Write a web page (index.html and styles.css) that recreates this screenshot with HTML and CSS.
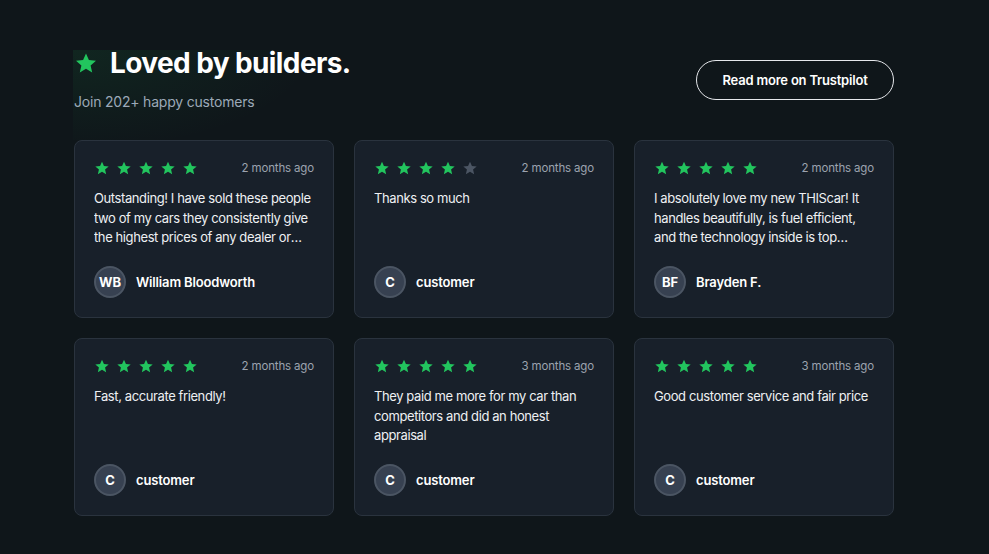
FILE: index.html
```html
<!DOCTYPE html>
<html lang="en">
<head>
<meta charset="utf-8">
<title>Loved by builders</title>
<link rel="stylesheet" href="styles.css">
</head>
<body>
<section class="reviews">
  <header class="reviews-head">
    <div class="head-text">
      <h1 class="title">
        <svg class="title-star" viewBox="0 0 24 24"><path d="M12 2.5l2.9 6.6 7.1.6-5.4 4.7 1.6 7-6.2-3.7-6.2 3.7 1.6-7L2 9.7l7.1-.6z"/></svg>
        Loved by builders.
      </h1>
      <p class="subtitle">Join 202+ happy customers</p>
    </div>
    <a class="tp-btn" href="#">Read more on Trustpilot</a>
  </header>

  <div class="grid">
    <article class="card">
      <div class="card-top">
        <div class="stars">
          <svg class="star on" viewBox="0 0 24 24"><path d="M12 2.5l2.9 6.6 7.1.6-5.4 4.7 1.6 7-6.2-3.7-6.2 3.7 1.6-7L2 9.7l7.1-.6z"/></svg>
          <svg class="star on" viewBox="0 0 24 24"><path d="M12 2.5l2.9 6.6 7.1.6-5.4 4.7 1.6 7-6.2-3.7-6.2 3.7 1.6-7L2 9.7l7.1-.6z"/></svg>
          <svg class="star on" viewBox="0 0 24 24"><path d="M12 2.5l2.9 6.6 7.1.6-5.4 4.7 1.6 7-6.2-3.7-6.2 3.7 1.6-7L2 9.7l7.1-.6z"/></svg>
          <svg class="star on" viewBox="0 0 24 24"><path d="M12 2.5l2.9 6.6 7.1.6-5.4 4.7 1.6 7-6.2-3.7-6.2 3.7 1.6-7L2 9.7l7.1-.6z"/></svg>
          <svg class="star on" viewBox="0 0 24 24"><path d="M12 2.5l2.9 6.6 7.1.6-5.4 4.7 1.6 7-6.2-3.7-6.2 3.7 1.6-7L2 9.7l7.1-.6z"/></svg>
        </div>
        <span class="date">2 months ago</span>
      </div>
      <p class="text">Outstanding! I have sold these people two of my cars they consistently give the highest prices of any dealer or buyer that I have ever dealt with.</p>
      <div class="author"><span class="avatar">WB</span><span class="name">William Bloodworth</span></div>
    </article>

    <article class="card">
      <div class="card-top">
        <div class="stars">
          <svg class="star on" viewBox="0 0 24 24"><path d="M12 2.5l2.9 6.6 7.1.6-5.4 4.7 1.6 7-6.2-3.7-6.2 3.7 1.6-7L2 9.7l7.1-.6z"/></svg>
          <svg class="star on" viewBox="0 0 24 24"><path d="M12 2.5l2.9 6.6 7.1.6-5.4 4.7 1.6 7-6.2-3.7-6.2 3.7 1.6-7L2 9.7l7.1-.6z"/></svg>
          <svg class="star on" viewBox="0 0 24 24"><path d="M12 2.5l2.9 6.6 7.1.6-5.4 4.7 1.6 7-6.2-3.7-6.2 3.7 1.6-7L2 9.7l7.1-.6z"/></svg>
          <svg class="star on" viewBox="0 0 24 24"><path d="M12 2.5l2.9 6.6 7.1.6-5.4 4.7 1.6 7-6.2-3.7-6.2 3.7 1.6-7L2 9.7l7.1-.6z"/></svg>
          <svg class="star off" viewBox="0 0 24 24"><path d="M12 2.5l2.9 6.6 7.1.6-5.4 4.7 1.6 7-6.2-3.7-6.2 3.7 1.6-7L2 9.7l7.1-.6z"/></svg>
        </div>
        <span class="date">2 months ago</span>
      </div>
      <p class="text">Thanks so much</p>
      <div class="author"><span class="avatar">C</span><span class="name">customer</span></div>
    </article>

    <article class="card">
      <div class="card-top">
        <div class="stars">
          <svg class="star on" viewBox="0 0 24 24"><path d="M12 2.5l2.9 6.6 7.1.6-5.4 4.7 1.6 7-6.2-3.7-6.2 3.7 1.6-7L2 9.7l7.1-.6z"/></svg>
          <svg class="star on" viewBox="0 0 24 24"><path d="M12 2.5l2.9 6.6 7.1.6-5.4 4.7 1.6 7-6.2-3.7-6.2 3.7 1.6-7L2 9.7l7.1-.6z"/></svg>
          <svg class="star on" viewBox="0 0 24 24"><path d="M12 2.5l2.9 6.6 7.1.6-5.4 4.7 1.6 7-6.2-3.7-6.2 3.7 1.6-7L2 9.7l7.1-.6z"/></svg>
          <svg class="star on" viewBox="0 0 24 24"><path d="M12 2.5l2.9 6.6 7.1.6-5.4 4.7 1.6 7-6.2-3.7-6.2 3.7 1.6-7L2 9.7l7.1-.6z"/></svg>
          <svg class="star on" viewBox="0 0 24 24"><path d="M12 2.5l2.9 6.6 7.1.6-5.4 4.7 1.6 7-6.2-3.7-6.2 3.7 1.6-7L2 9.7l7.1-.6z"/></svg>
        </div>
        <span class="date">2 months ago</span>
      </div>
      <p class="text">I absolutely love my new THIScar! It handles beautifully, is fuel efficient, and the technology inside is top notch. The whole experience was great.</p>
      <div class="author"><span class="avatar">BF</span><span class="name">Brayden F.</span></div>
    </article>

    <article class="card">
      <div class="card-top">
        <div class="stars">
          <svg class="star on" viewBox="0 0 24 24"><path d="M12 2.5l2.9 6.6 7.1.6-5.4 4.7 1.6 7-6.2-3.7-6.2 3.7 1.6-7L2 9.7l7.1-.6z"/></svg>
          <svg class="star on" viewBox="0 0 24 24"><path d="M12 2.5l2.9 6.6 7.1.6-5.4 4.7 1.6 7-6.2-3.7-6.2 3.7 1.6-7L2 9.7l7.1-.6z"/></svg>
          <svg class="star on" viewBox="0 0 24 24"><path d="M12 2.5l2.9 6.6 7.1.6-5.4 4.7 1.6 7-6.2-3.7-6.2 3.7 1.6-7L2 9.7l7.1-.6z"/></svg>
          <svg class="star on" viewBox="0 0 24 24"><path d="M12 2.5l2.9 6.6 7.1.6-5.4 4.7 1.6 7-6.2-3.7-6.2 3.7 1.6-7L2 9.7l7.1-.6z"/></svg>
          <svg class="star on" viewBox="0 0 24 24"><path d="M12 2.5l2.9 6.6 7.1.6-5.4 4.7 1.6 7-6.2-3.7-6.2 3.7 1.6-7L2 9.7l7.1-.6z"/></svg>
        </div>
        <span class="date">2 months ago</span>
      </div>
      <p class="text">Fast, accurate friendly!</p>
      <div class="author"><span class="avatar">C</span><span class="name">customer</span></div>
    </article>

    <article class="card">
      <div class="card-top">
        <div class="stars">
          <svg class="star on" viewBox="0 0 24 24"><path d="M12 2.5l2.9 6.6 7.1.6-5.4 4.7 1.6 7-6.2-3.7-6.2 3.7 1.6-7L2 9.7l7.1-.6z"/></svg>
          <svg class="star on" viewBox="0 0 24 24"><path d="M12 2.5l2.9 6.6 7.1.6-5.4 4.7 1.6 7-6.2-3.7-6.2 3.7 1.6-7L2 9.7l7.1-.6z"/></svg>
          <svg class="star on" viewBox="0 0 24 24"><path d="M12 2.5l2.9 6.6 7.1.6-5.4 4.7 1.6 7-6.2-3.7-6.2 3.7 1.6-7L2 9.7l7.1-.6z"/></svg>
          <svg class="star on" viewBox="0 0 24 24"><path d="M12 2.5l2.9 6.6 7.1.6-5.4 4.7 1.6 7-6.2-3.7-6.2 3.7 1.6-7L2 9.7l7.1-.6z"/></svg>
          <svg class="star on" viewBox="0 0 24 24"><path d="M12 2.5l2.9 6.6 7.1.6-5.4 4.7 1.6 7-6.2-3.7-6.2 3.7 1.6-7L2 9.7l7.1-.6z"/></svg>
        </div>
        <span class="date">3 months ago</span>
      </div>
      <p class="text">They paid me more for my car than competitors and did an honest appraisal</p>
      <div class="author"><span class="avatar">C</span><span class="name">customer</span></div>
    </article>

    <article class="card">
      <div class="card-top">
        <div class="stars">
          <svg class="star on" viewBox="0 0 24 24"><path d="M12 2.5l2.9 6.6 7.1.6-5.4 4.7 1.6 7-6.2-3.7-6.2 3.7 1.6-7L2 9.7l7.1-.6z"/></svg>
          <svg class="star on" viewBox="0 0 24 24"><path d="M12 2.5l2.9 6.6 7.1.6-5.4 4.7 1.6 7-6.2-3.7-6.2 3.7 1.6-7L2 9.7l7.1-.6z"/></svg>
          <svg class="star on" viewBox="0 0 24 24"><path d="M12 2.5l2.9 6.6 7.1.6-5.4 4.7 1.6 7-6.2-3.7-6.2 3.7 1.6-7L2 9.7l7.1-.6z"/></svg>
          <svg class="star on" viewBox="0 0 24 24"><path d="M12 2.5l2.9 6.6 7.1.6-5.4 4.7 1.6 7-6.2-3.7-6.2 3.7 1.6-7L2 9.7l7.1-.6z"/></svg>
          <svg class="star on" viewBox="0 0 24 24"><path d="M12 2.5l2.9 6.6 7.1.6-5.4 4.7 1.6 7-6.2-3.7-6.2 3.7 1.6-7L2 9.7l7.1-.6z"/></svg>
        </div>
        <span class="date">3 months ago</span>
      </div>
      <p class="text">Good customer service and fair price</p>
      <div class="author"><span class="avatar">C</span><span class="name">customer</span></div>
    </article>
  </div>
</section>
</body>
</html>
```

FILE: styles.css
```css
* { box-sizing: border-box; }

html, body {
  margin: 0;
  padding: 0;
  background: #0f161a;
  color: #fff;
  font-family: Inter, "Noto Sans", "Liberation Sans", sans-serif;
  height: 100%;
}

.reviews {
  width: 820px;
  margin-left: 74px;
  padding-top: 50px;
}

.reviews-head {
  display: flex;
  justify-content: space-between;
  align-items: flex-start;
  height: 90px;
}

.head-text {
  align-self: stretch;
  width: 290px;
  margin-left: -1px;
  padding-left: 1px;
  background: radial-gradient(ellipse 240px 100px at 0 0, rgba(34, 197, 94, 0.09), rgba(34, 197, 94, 0) 100%);
}

.title {
  display: flex;
  align-items: center;
  gap: 12px;
  margin: 0;
  font-size: 28px;
  font-weight: 700;
  letter-spacing: -0.6px;
  line-height: 26px;
}

.title-star {
  width: 24px;
  height: 24px;
  fill: #22c55e;
}

.subtitle {
  margin: 16px 0 0;
  font-size: 14px;
  letter-spacing: -0.2px;
  color: #9ca9b8;
  line-height: 20px;
}

.tp-btn {
  display: inline-flex;
  align-items: center;
  justify-content: center;
  width: 198px;
  height: 40px;
  margin-top: 10px;
  border: 1px solid #e5e7eb;
  border-radius: 20px;
  color: #fff;
  text-decoration: none;
  font-size: 13px;
  letter-spacing: -0.2px;
  font-weight: 600;
}

.grid {
  display: grid;
  grid-template-columns: repeat(3, 260px);
  column-gap: 20px;
  row-gap: 20px;
}

.card {
  background: #18202a;
  border: 1px solid #2a333e;
  border-radius: 8px;
  padding: 19px 19px 19px;
  height: 178px;
  display: flex;
  flex-direction: column;
}

.card-top {
  display: flex;
  justify-content: space-between;
  align-items: center;
  height: 16px;
}

.stars {
  display: flex;
  gap: 6px;
}

.star {
  width: 16px;
  height: 16px;
}
.star.on { fill: #22c55e; }
.star.off { fill: #4b5563; }

.date {
  font-size: 11.5px;
  letter-spacing: -0.15px;
  color: #9ca3af;
}

.text {
  margin: 13px 0 0;
  font-size: 13px;
  letter-spacing: -0.4px;
  line-height: 19.5px;
  color: #eef0f3;
  height: 58.5px;
  display: -webkit-box;
  -webkit-line-clamp: 3;
  -webkit-box-orient: vertical;
  overflow: hidden;
}

.author {
  margin-top: auto;
  display: flex;
  align-items: center;
  gap: 10px;
}

.avatar {
  width: 32px;
  height: 32px;
  border-radius: 50%;
  background: #374151;
  border: 2px solid #4b5563;
  display: flex;
  align-items: center;
  justify-content: center;
  font-size: 13px;
  font-weight: 700;
  color: #fff;
}

.name {
  font-size: 13px;
  letter-spacing: -0.15px;
  font-weight: 600;
  color: #fff;
}
```
